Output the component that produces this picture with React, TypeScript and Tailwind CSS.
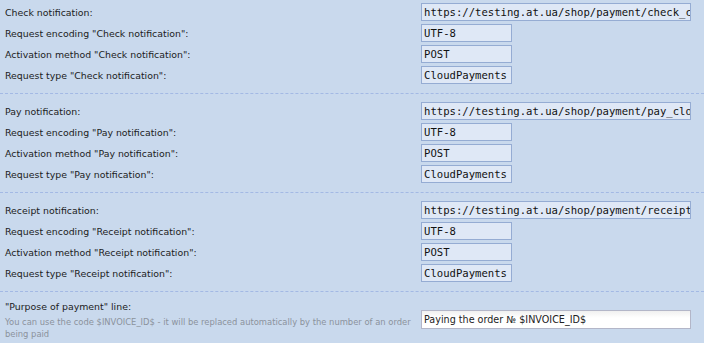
import React from 'react';

const sans = { fontFamily: '"DejaVu Sans", Verdana, sans-serif' };

interface Row {
  label: string;
  value: string;
  wide?: boolean;
}

const sections: Row[][] = [
  [
    { label: 'Check notification:', value: 'https://testing.at.ua/shop/payment/check_cloudpayments', wide: true },
    { label: 'Request encoding "Check notification":', value: 'UTF-8' },
    { label: 'Activation method "Check notification":', value: 'POST' },
    { label: 'Request type "Check notification":', value: 'CloudPayments' },
  ],
  [
    { label: 'Pay notification:', value: 'https://testing.at.ua/shop/payment/pay_cloudpayments', wide: true },
    { label: 'Request encoding "Pay notification":', value: 'UTF-8' },
    { label: 'Activation method "Pay notification":', value: 'POST' },
    { label: 'Request type "Pay notification":', value: 'CloudPayments' },
  ],
  [
    { label: 'Receipt notification:', value: 'https://testing.at.ua/shop/payment/receipt_cloudpayments', wide: true },
    { label: 'Request encoding "Receipt notification":', value: 'UTF-8' },
    { label: 'Activation method "Receipt notification":', value: 'POST' },
    { label: 'Request type "Receipt notification":', value: 'CloudPayments' },
  ],
];

const Field = ({ value, wide }: { value: string; wide?: boolean }) => (
  <div
    className={`h-[18px] border border-[#95acd3] bg-[#dfe8f6] pl-[2px] overflow-hidden whitespace-nowrap text-[10.6px] leading-[16px] text-[#111] ${
      wide ? 'w-[270px]' : 'w-[91px]'
    }`}
    style={{ fontFamily: '"DejaVu Sans Mono", "Liberation Mono", monospace' }}
  >
    {value}
  </div>
);

export default function App() {
  return (
    <div className="w-[704px] h-[343px] bg-[#c9d9ed] overflow-hidden text-[#1c1c1c]" style={sans}>
      {sections.map((rows, i) => (
        <div
          key={i}
          className={`border-b border-dashed border-[#a3b9e4] pb-[6px] ${i === 0 ? 'pt-[3px]' : 'pt-[8px]'}`}
        >
          {rows.map((row) => (
            <div key={row.label} className="flex items-start h-[21px]">
              <div className="w-[421px] pl-[5px] text-[9.4px] leading-[19px]">{row.label}</div>
              <Field value={row.value} wide={row.wide} />
            </div>
          ))}
        </div>
      ))}

      <div className="flex items-start pt-[8px]">
        <div className="w-[421px] pl-[5px]">
          <div className="text-[9.4px] leading-[14px]">"Purpose of payment" line:</div>
          <div className="text-[8.4px] leading-[12px] text-[#8b929c] mt-[2px]">
            You can use the code $INVOICE_ID$ - it will be replaced automatically by the number of an order being paid
          </div>
        </div>
        <div className="mt-[10px] w-[270px] h-[19px] border border-[#b3b6c8] bg-gradient-to-b from-[#f0f0f0] to-white to-40% pl-[2px] text-[9.6px] leading-[17px] text-[#222]">
          Paying the order № $INVOICE_ID$
        </div>
      </div>
    </div>
  );
}
